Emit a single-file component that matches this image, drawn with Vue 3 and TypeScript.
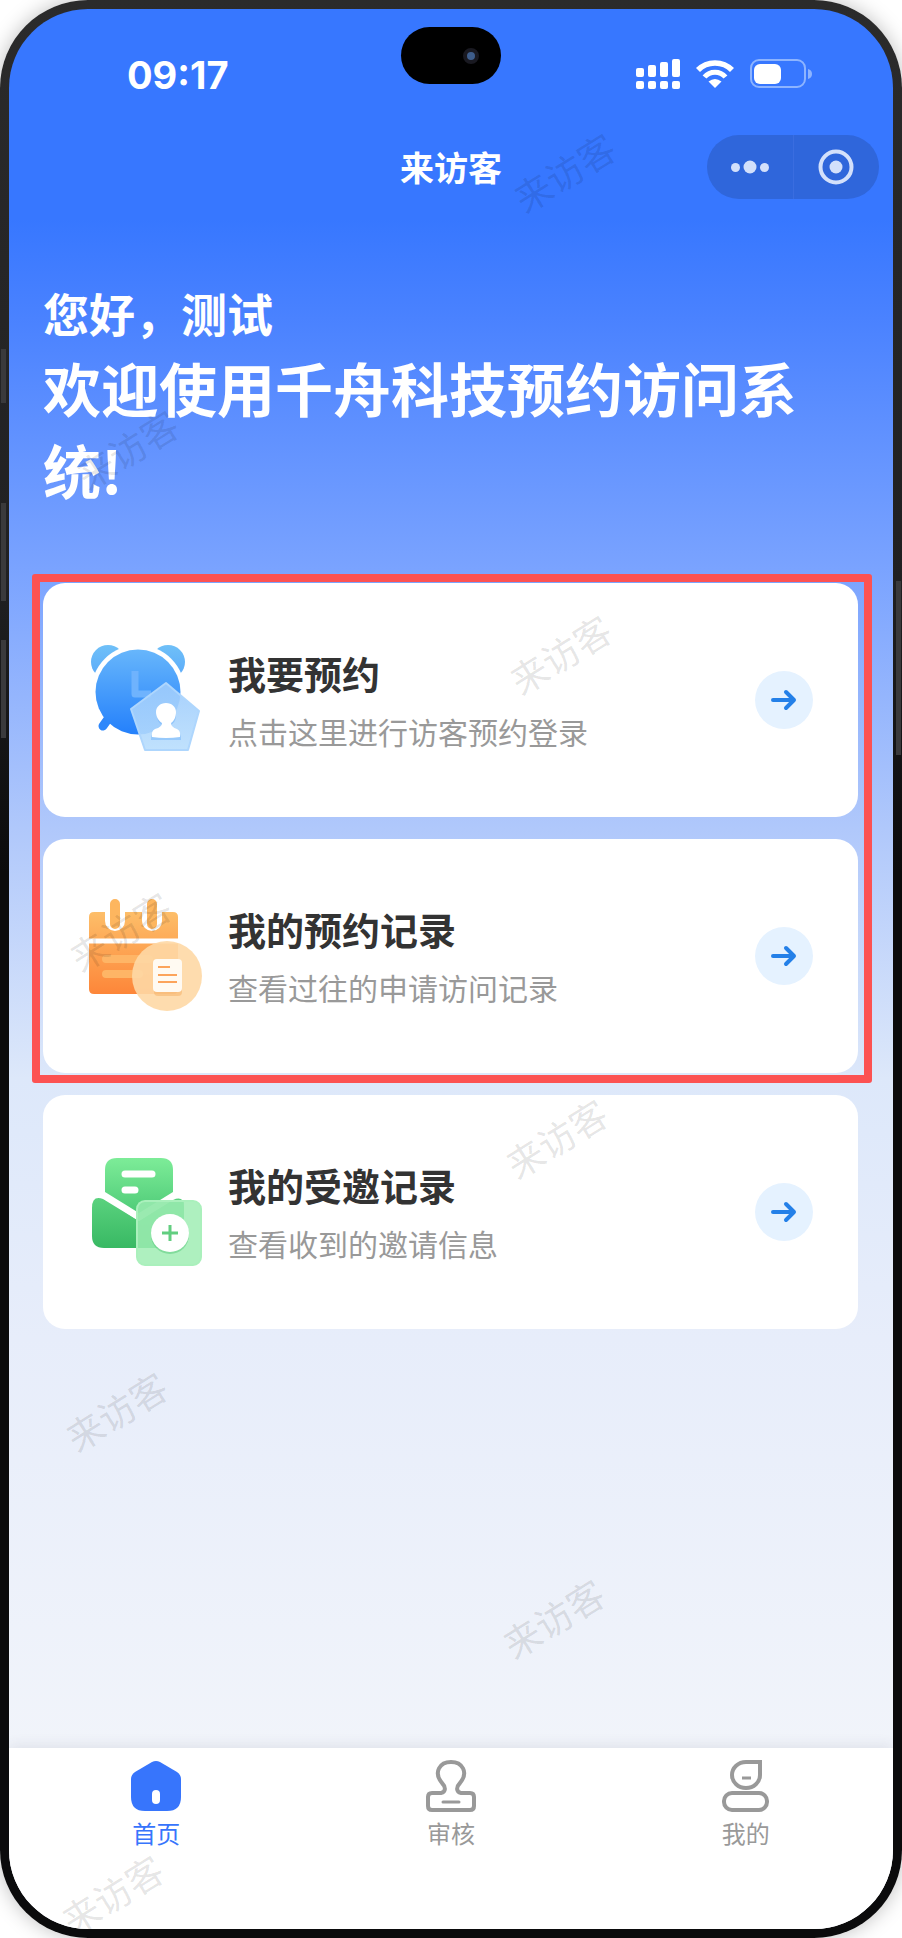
<script setup lang="ts">
interface Entry {
  kind: 'clock' | 'calendar' | 'invite'
  title: string
  desc: string
}

const booking: Entry[] = [
  { kind: 'clock', title: '我要预约', desc: '点击这里进行访客预约登录' },
  { kind: 'calendar', title: '我的预约记录', desc: '查看过往的申请访问记录' },
]
const invited: Entry[] = [
  { kind: 'invite', title: '我的受邀记录', desc: '查看收到的邀请信息' },
]
const groups = [
  { id: 'booking', marked: true, items: booking },
  { id: 'invited', marked: false, items: invited },
]

const tabs = [
  { id: 'home', label: '首页' },
  { id: 'review', label: '审核' },
  { id: 'mine', label: '我的' },
]
const active = 'home'

// Centres of the repeated watermark, in percent of the screen area.
const marks = [
  { x: 62.8, y: 8.5 },
  { x: 13.4, y: 22.9 },
  { x: 62.3, y: 33.6 },
  { x: 12.6, y: 48 },
  { x: 61.9, y: 58.8 },
  { x: 12.1, y: 73 },
  { x: 61.5, y: 83.8 },
  { x: 11.6, y: 98.2 },
]
</script>

<template>
  <div class="device">
    <i class="key key-l1"></i>
    <i class="key key-l2"></i>
    <i class="key key-l3"></i>
    <i class="key key-r"></i>

    <div class="screen">
      <header>
        <div class="status">
          <time>09:17</time>
          <div class="island"><i></i></div>
          <div class="signals">
            <svg width="44" height="30" viewBox="0 0 44 30" fill="#fff" aria-hidden="true">
              <rect x="0" y="9" width="8" height="9" rx="2" />
              <rect x="12" y="6" width="8" height="12" rx="2" />
              <rect x="24" y="3" width="8" height="15" rx="2" />
              <rect x="36" y="0" width="8" height="18" rx="2" />
              <rect x="0" y="22" width="8" height="8" rx="2" />
              <rect x="12" y="22" width="8" height="8" rx="2" />
              <rect x="24" y="22" width="8" height="8" rx="2" />
              <rect x="36" y="22" width="8" height="8" rx="2" />
            </svg>
            <svg width="40" height="30" viewBox="0 0 40 30" aria-hidden="true">
              <path d="M3 11C12 1.500 28 1.500 37 11" fill="none" stroke="#fff" stroke-width="5.500" />
              <path d="M9.500 18C15 11.500 25 11.500 30.500 18" fill="none" stroke="#fff" stroke-width="5" />
              <path d="M20 29L13.500 22.500Q20 17.500 26.500 22.500Z" fill="#fff" />
            </svg>
            <svg width="62" height="30" viewBox="0 0 62 30" aria-hidden="true">
              <rect x="1" y="1" width="54" height="27" rx="8" fill="none" stroke="#8db4ff" stroke-width="2" />
              <rect x="4" y="5" width="27" height="20" rx="6" fill="#fff" />
              <path d="M58 10Q62 11 62 15Q62 19 58 20Z" fill="#8db4ff" />
            </svg>
          </div>
        </div>

        <div class="nav">
          <h1>来访客</h1>
          <div class="capsule">
            <button type="button" aria-label="更多">
              <svg width="38" height="14" viewBox="0 0 38 14" fill="#d3e0fb">
                <circle cx="4.500" cy="7.500" r="4.500" />
                <circle cx="19" cy="7" r="6.500" />
                <circle cx="33.500" cy="7.500" r="4.500" />
              </svg>
            </button>
            <button type="button" aria-label="关闭">
              <svg width="36" height="36" viewBox="0 0 36 36">
                <circle cx="18" cy="18" r="15.500" fill="none" stroke="#d3e0fb" stroke-width="4" />
                <circle cx="18" cy="18" r="6.500" fill="#d3e0fb" />
              </svg>
            </button>
          </div>
        </div>
      </header>

      <main>
        <p class="hello">您好，测试</p>
        <h2>欢迎使用千舟科技预约访问系统!</h2>

        <div class="groups">
          <div v-for="g in groups" :key="g.id" class="group" :class="{ marked: g.marked }">
            <a v-for="e in g.items" :key="e.title" class="card" href="#">
              <svg v-if="e.kind === 'clock'" class="art" width="116" height="116" viewBox="0 0 116 116" aria-hidden="true">
                <defs>
                  <linearGradient id="ck" x1="0" y1="0" x2="0" y2="1">
                    <stop offset="0" stop-color="#67b6fb" />
                    <stop offset="1" stop-color="#2480fb" />
                  </linearGradient>
                  <linearGradient id="ear" x1="0" y1="0" x2="0" y2="1">
                    <stop offset="0" stop-color="#6fc0f8" />
                    <stop offset="1" stop-color="#5aa9fa" />
                  </linearGradient>
                  <linearGradient id="pent" x1="0" y1="0" x2="0" y2="1">
                    <stop offset="0" stop-color="#9dcbfc" />
                    <stop offset="1" stop-color="#b9defd" />
                  </linearGradient>
                </defs>
                <circle cx="19" cy="20" r="17" fill="url(#ear)" />
                <circle cx="79" cy="20" r="17" fill="url(#ear)" />
                <circle cx="49" cy="50" r="47" fill="#fff" />
                <path d="M19 77L14 84" stroke="#2d87fb" stroke-width="9" stroke-linecap="round" />
                <circle cx="49" cy="50" r="42.500" fill="url(#ck)" />
                <path d="M46 29V52H62" fill="none" stroke="#6fb3fd" stroke-width="7" stroke-linejoin="round" />
                <path d="M77 41L110 69L99 108H56L42 67Z" fill="url(#pent)" fill-opacity=".9" stroke="#aed6fd" stroke-width="2" stroke-linejoin="round" />
                <path d="M78 62C72 62 68 66 68 71C68 76 70 79 73 81Q73 85 66 87Q62 89 62 96H92Q92 89 89 87Q82 85 82 81C85 79 87 76 87 71C87 66 83 62 78 62Z" transform="translate(0 2)" fill="#72b3f9" opacity=".5" />
                <path d="M77 61C71 61 67 65 67 70C67 75 70 79 73 81Q73 85 66 87Q62 89 63 95Q77 97 91 95Q92 89 88 87Q82 85 82 81C85 79 87 75 87 70C87 65 83 61 77 61Z" fill="#fff" />
              </svg>

              <svg v-else-if="e.kind === 'calendar'" class="art" width="116" height="116" viewBox="0 -5 116 116" aria-hidden="true">
                <defs>
                  <linearGradient id="cal" x1="0" y1="0" x2="0" y2="1">
                    <stop offset="0" stop-color="#fdbe69" />
                    <stop offset="1" stop-color="#fd8639" />
                  </linearGradient>
                </defs>
                <path d="M5 9H84Q89 9 89 14V86Q89 91 84 91H5Q0 91 0 86V14Q0 9 5 9Z" fill="url(#cal)" />
                <path d="M0 38H90" stroke="#fff" stroke-width="5" />
                <path d="M26 7V18M63 7V18" stroke="#fff" stroke-width="20" stroke-linecap="round" />
                <path d="M26 1V21M63 1V21" stroke="#fdb65f" stroke-width="10" stroke-linecap="round" />
                <path d="M17 56H60M17 71H50" stroke="#feb566" stroke-width="8" stroke-linecap="round" />
                <circle cx="78" cy="73" r="35" fill="#fed8a5" fill-opacity=".9" />
                <rect x="65" y="59" width="28" height="34" rx="4" fill="#f5a85c" opacity=".45" />
                <rect x="64" y="56" width="29" height="33" rx="4" fill="#fffaf2" />
                <path d="M69 64H81M69 72H88M69 79H88" stroke="#fca45b" stroke-width="2" />
              </svg>

              <svg v-else class="art" width="116" height="116" viewBox="0 -4 116 116" aria-hidden="true">
                <defs>
                  <linearGradient id="paper" x1="0" y1="0" x2="0" y2="1">
                    <stop offset="0" stop-color="#7dec98" />
                    <stop offset="1" stop-color="#4fcb78" />
                  </linearGradient>
                  <linearGradient id="env" x1="0" y1="0" x2="0" y2="1">
                    <stop offset="0" stop-color="#5ad27e" />
                    <stop offset="1" stop-color="#38b963" />
                  </linearGradient>
                </defs>
                <path d="M28 0H72Q84 0 84 12V34L50 55L16 34V12Q16 0 28 0Z" fill="url(#paper)" />
                <path d="M3 50Q3 37 14 41L50 63L84 42Q95 37 95 49V78Q95 90 83 90H15Q3 90 3 78Z" fill="url(#env)" />
                <path d="M13 36L50 60L85 37" fill="none" stroke="#fff" stroke-width="5" />
                <path d="M36 16H63M36 32H46" stroke="#fff" stroke-width="7" stroke-linecap="round" />
                <rect x="48" y="43" width="64" height="64" rx="8" fill="#a5eeb8" fill-opacity=".9" />
                <path d="M49 44H95V78Q95 90 83 90H49Z" fill="#7ee09a" fill-opacity=".4" />
                <rect x="48" y="43" width="64" height="64" rx="8" fill="none" stroke="#aaf0bc" stroke-width="2" />
                <circle cx="81" cy="77" r="19" fill="#55c77a" opacity=".5" />
                <circle cx="81" cy="75" r="19" fill="#fff" />
                <path d="M81 67V83M73 75H89" stroke="#62ce80" stroke-width="3" />
              </svg>

              <span class="copy">
                <strong>{{ e.title }}</strong>
                <span>{{ e.desc }}</span>
              </span>
              <span class="go">
                <svg width="26" height="22" viewBox="0 0 26 22" fill="none" stroke="#2480e8" stroke-width="4" stroke-linecap="round" stroke-linejoin="round" aria-hidden="true">
                  <path d="M2 11H23M15 3L23 11L15 19" />
                </svg>
              </span>
            </a>
          </div>
        </div>
      </main>

      <nav class="tabs">
        <a v-for="t in tabs" :key="t.id" href="#" :class="{ on: t.id === active }">
          <svg v-if="t.id === 'home'" width="52" height="52" viewBox="0 0 52 52" aria-hidden="true">
            <path d="M22 2Q26 0 30 2L47 12Q51 15 51 19V37Q51 51 37 51H15Q1 51 1 37V19Q1 15 5 12Z" fill="#3775fc" />
            <rect x="22" y="30" width="8" height="14" rx="4" fill="#fff" />
          </svg>
          <svg v-else-if="t.id === 'review'" width="52" height="52" viewBox="0 0 52 52" fill="none" stroke="#999" stroke-width="4" aria-hidden="true">
            <path d="M16 33C21 32 21 27 17 23C8 12 15 2 26 2C37 2 44 12 35 23C31 27 31 32 36 33H45Q49 33 49 37V46Q49 50 45 50H7Q3 50 3 46V37Q3 33 7 33Z" stroke-linejoin="round" />
            <path d="M18 42H34" stroke-width="3" stroke-linecap="round" />
          </svg>
          <svg v-else width="52" height="52" viewBox="0 0 52 52" fill="none" stroke="#999" stroke-width="4" aria-hidden="true">
            <path d="M26 2H40V15A14 13 0 1 1 26 2Z" />
            <path d="M22 18H31" stroke-width="3" />
            <rect x="4" y="33" width="43" height="17" rx="8" />
          </svg>
          <span>{{ t.label }}</span>
        </a>
      </nav>

      <div class="watermarks" aria-hidden="true">
        <span v-for="(m, i) in marks" :key="i" :style="{ left: m.x + '%', top: m.y + '%' }">来访客</span>
      </div>
    </div>
  </div>
</template>

<style>
body {
  margin: 0;
  background: #fff;
}
</style>

<style scoped>
* {
  box-sizing: border-box;
}

.device {
  position: relative;
  min-height: 100vh;
  padding: 9px;
  display: flex;
  border-radius: 88px;
  background: linear-gradient(#2b2b2b, #202022 30%, #0b0b0c 45%);
  box-shadow: 0 0 20px rgba(0, 0, 0, 0.25);
  font-family: "Noto Sans CJK SC", "Noto Sans", sans-serif;
}

.key {
  position: absolute;
  left: 1px;
  width: 5px;
  background: #3a3a3c;
}
.key-l1 { top: 349px; height: 54px; }
.key-l2 { top: 503px; height: 98px; }
.key-l3 { top: 640px; height: 98px; }
.key-r { left: auto; right: 1px; top: 581px; height: 174px; }

.screen {
  position: relative;
  flex: 1;
  min-width: 0;
  display: flex;
  flex-direction: column;
  overflow: hidden;
  border-radius: 79px;
  background: linear-gradient(#3777ff 0, #3777ff 210px, #4a82ff 310px, #7aa3ff 560px, #b0c8fb 820px, #dde8fa 1070px, #e7edfa 1330px, #f1f4fa 1740px);
}

.status {
  display: grid;
  grid-template-columns: 1fr auto 1fr;
  align-items: start;
  padding-top: 18px;
}
time {
  padding: 30px 0 0 118px;
  color: #fff;
  font: 700 38px/36px Inter, sans-serif;
}
.island {
  display: flex;
  justify-content: flex-end;
  align-items: center;
  width: 100px;
  height: 57px;
  padding-right: 22px;
  border-radius: 29px;
  background: #000;
}
.island i {
  width: 16px;
  height: 16px;
  border: 4px solid #191921;
  border-radius: 50%;
  background: #3e5d8b;
}
.signals {
  display: flex;
  justify-content: flex-end;
  gap: 15px;
  padding: 32px 81px 0 0;
}

.nav {
  position: relative;
  display: flex;
  justify-content: center;
  align-items: center;
  height: 64px;
  margin-top: 42px;
}
h1 {
  margin: 0;
  color: #fff;
  font-size: 34px;
  line-height: 48px;
}
.capsule {
  position: absolute;
  right: 14px;
  display: flex;
  width: 172px;
  height: 64px;
  border-radius: 32px;
  background: #2f66db;
}
.capsule button {
  flex: 1;
  display: flex;
  align-items: center;
  justify-content: center;
  padding: 0;
  border: 0;
  background: none;
}
.capsule button + button {
  border-left: 1px solid #3a6de0;
}

main {
  flex: 1;
  padding: 79px 35px 0 34px;
}
.hello {
  margin: 0;
  color: #fff;
  font-size: 46px;
  font-weight: 700;
  line-height: 68px;
}
h2 {
  margin: 0;
  color: #fff;
  font-size: 58px;
  font-weight: 700;
  line-height: 82px;
}

.groups,
.group {
  display: flex;
  flex-direction: column;
  gap: 22px;
}
.groups {
  margin-top: 73px;
}
.group {
  position: relative;
}
.marked::after {
  content: "";
  position: absolute;
  inset: -9px -14px -10px -11px;
  border: 8px solid #fc5252;
  border-radius: 3px;
  pointer-events: none;
}
.card {
  display: flex;
  align-items: center;
  min-height: 234px;
  padding: 0 45px 0 46px;
  border-radius: 22px;
  background: #fff;
  color: inherit;
  text-decoration: none;
}
.art {
  flex: none;
  overflow: visible;
}
.copy {
  flex: 1;
  display: flex;
  flex-direction: column;
  gap: 6px;
  padding-left: 23px;
}
.copy strong {
  color: #333;
  font-size: 38px;
  line-height: 56px;
}
.copy span {
  color: #999;
  font-size: 30px;
  font-weight: 400;
  line-height: 48px;
}
.go {
  display: flex;
  align-items: center;
  justify-content: center;
  width: 58px;
  height: 58px;
  border-radius: 50%;
  background: #e5f2ff;
}

.tabs {
  display: flex;
  align-items: flex-start;
  height: 181px;
  padding-top: 12px;
  background: #fff;
  box-shadow: 0 -3px 12px rgba(60, 60, 80, 0.09);
}
.tabs a {
  flex: 1;
  display: flex;
  flex-direction: column;
  align-items: center;
  gap: 4px;
  color: #999;
  font-size: 24px;
  line-height: 34px;
  text-decoration: none;
}
.tabs .on {
  color: #3775fc;
}

.watermarks {
  position: absolute;
  inset: 0;
  pointer-events: none;
}
.watermarks span {
  position: absolute;
  transform: translate(-50%, -50%) rotate(-32deg);
  color: rgba(0, 0, 0, 0.11);
  font-size: 37px;
  font-weight: 400;
  line-height: 37px;
  white-space: nowrap;
}
</style>
